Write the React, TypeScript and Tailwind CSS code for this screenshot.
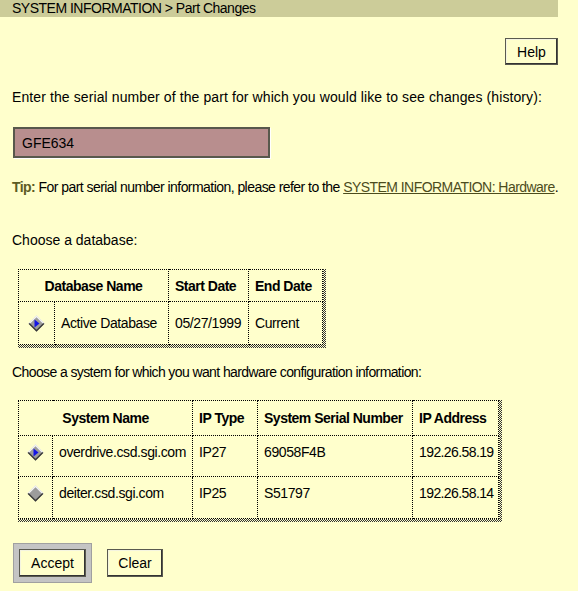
import React from 'react'

const font = { fontFamily: '"Liberation Sans", Arial, sans-serif' }

function Radio({ on }: { on?: boolean }) {
  return (
    <svg width="17" height="17" viewBox="0 0 17 17" className="block mx-auto">
      <polygon points="8.5,0.5 16.5,8.5 8.5,16.5 0.5,8.5" fill="#9c9c9c" />
      <polyline points="1.2,8.5 8.5,1.2 15.8,8.5" fill="none" stroke="#f4f4f4" strokeWidth="1.4" />
      <polyline points="1.2,8.5 8.5,15.8 15.8,8.5" fill="none" stroke="#383838" strokeWidth="1.4" />
      {on && <polygon points="6.5,4.5 11.5,8.5 6.5,12.5" fill="#1414e6" />}
    </svg>
  )
}

function Checker({ children }: { children: React.ReactNode }) {
  return (
    <div className="inline-block pr-[3px] pb-[3px] bg-[repeating-conic-gradient(#333_0_25%,#ffffcc_0_50%)] bg-[length:2px_2px]">
      <div className="bg-[#ffffcc]">{children}</div>
    </div>
  )
}

const th = 'border border-dotted border-black font-bold px-[6px] tracking-[-0.5px] whitespace-nowrap'
const td = 'border border-dotted border-black px-[6px] tracking-[-0.4px] whitespace-nowrap'
const btn = 'bg-[#ffffcc] border border-[#5a5a50] shadow-[inset_-1px_-1px_0_#333,inset_1px_1px_0_#f4f4e0] leading-none'

export default function App() {
  const systems = [
    { on: true, name: 'overdrive.csd.sgi.com', ip: 'IP27', serial: '69058F4B', addr: '192.26.58.19', h: 'h-[41px]' },
    { on: false, name: 'deiter.csd.sgi.com', ip: 'IP25', serial: 'S51797', addr: '192.26.58.14', h: 'h-[42px]' },
  ]
  return (
    <div className="min-h-[591px] w-[578px] bg-[#ffffcc] text-[14px] text-black leading-none overflow-hidden" style={font}>
      <div className="w-[558px] h-[17px] bg-[#cccc99] pl-[12px] pt-[1px] tracking-[-0.5px] whitespace-nowrap">SYSTEM INFORMATION &gt; Part Changes</div>

      <div className="flex justify-end pr-[20px] mt-[21px]">
        <button className={btn + ' w-[53px] h-[27px]'}>Help</button>
      </div>

      <div className="pl-[12px] mt-[25px] whitespace-nowrap tracking-[0.1px]">Enter the serial number of the part for which you would like to see changes (history):</div>

      <div className="pl-[13px] mt-[23px]">
        <div className="w-[257px] h-[31px] bg-[#b88e8e] border-2 border-[#58584c] shadow-[1px_1px_0_#fff] pl-[7px] pt-[7px]">GFE634</div>
      </div>

      <div className="pl-[12px] mt-[22px] whitespace-nowrap tracking-[-0.55px]">
        <span className="font-bold text-[#5c5c24]">Tip:</span> For part serial number information, please refer to the{' '}
        <span className="underline text-[#4c4c1c]">SYSTEM INFORMATION: Hardware</span>.
      </div>

      <div className="pl-[12px] mt-[39px]">Choose a database:</div>

      <div className="pl-[18px] mt-[22px]">
        <Checker>
          <table className="border-collapse table-fixed w-[304px]">
            <colgroup>
              <col className="w-[36px]" />
              <col className="w-[114px]" />
              <col className="w-[80px]" />
              <col className="w-[74px]" />
            </colgroup>
            <thead>
              <tr className="h-[32px]">
                <th colSpan={2} className={th + ' text-center'}>Database Name</th>
                <th className={th + ' text-left'}>Start Date</th>
                <th className={th + ' text-left'}>End Date</th>
              </tr>
            </thead>
            <tbody>
              <tr className="h-[43px]">
                <td className="border border-dotted border-black"><Radio on /></td>
                <td className={td}>Active Database</td>
                <td className={td}>05/27/1999</td>
                <td className={td}>Current</td>
              </tr>
            </tbody>
          </table>
        </Checker>
      </div>

      <div className="pl-[12px] mt-[15px] whitespace-nowrap tracking-[-0.6px]">Choose a system for which you want hardware configuration information:</div>

      <div className="pl-[18px] mt-[21px]">
        <Checker>
          <table className="border-collapse table-fixed w-[480px]">
            <colgroup>
              <col className="w-[34px]" />
              <col className="w-[140px]" />
              <col className="w-[65px]" />
              <col className="w-[155px]" />
              <col className="w-[86px]" />
            </colgroup>
            <thead>
              <tr className="h-[35px]">
                <th colSpan={2} className={th + ' text-center'}>System Name</th>
                <th className={th + ' text-left'}>IP Type</th>
                <th className={th + ' text-left'}>System Serial Number</th>
                <th className={th + ' text-left'}>IP Address</th>
              </tr>
            </thead>
            <tbody>
              {systems.map(s => (
                <tr key={s.name} className={s.h}>
                  <td className="border border-dotted border-black align-top pt-[8px]"><Radio on={s.on} /></td>
                  <td className={td + ' align-top pt-[9px]'}>{s.name}</td>
                  <td className={td + ' align-top pt-[9px]'}>{s.ip}</td>
                  <td className={td + ' align-top pt-[9px]'}>{s.serial}</td>
                  <td className={td + ' align-top pt-[9px] px-[3px] tracking-[-0.6px]'}>{s.addr}</td>
                </tr>
              ))}
            </tbody>
          </table>
        </Checker>
      </div>

      <div className="flex items-center gap-[15px] pl-[13px] mt-[19px]">
        <div className="p-[5px] bg-[#c4c4c4] border border-[#a0a0a0]">
          <button className={btn + ' w-[67px] h-[28px]'}>Accept</button>
        </div>
        <button className={btn + ' w-[56px] h-[28px]'}>Clear</button>
      </div>
    </div>
  )
}
